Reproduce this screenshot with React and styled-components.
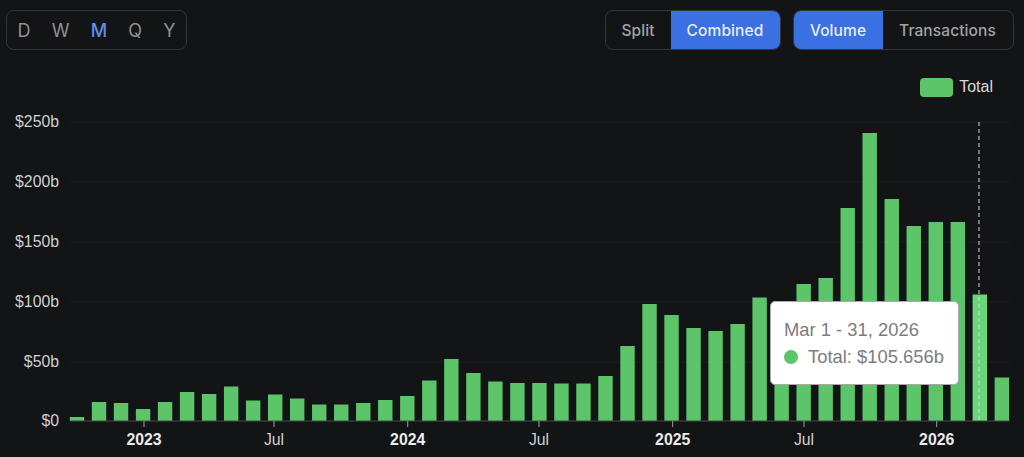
import React from 'react'
import styled, { createGlobalStyle } from 'styled-components'

const CHART_TOP = 100
const BASELINE = 421 - CHART_TOP
const BAR_WIDTH = 14.4
const BAR_START = 69.8
const BAR_STEP = 22.02

// top edge of each monthly bar, in page pixels
const barTops = [
    417, 402, 403, 409, 402, 392, 394, 386.5, 400.5, 394.5, 398.5,
    404.5, 404.5, 403, 400, 396, 380.5, 359, 373, 381.5, 383, 383,
    383.5, 383.5, 376, 346, 304, 315, 328, 331, 324, 297.5, 312,
    284, 278, 208, 133, 199, 226, 222, 222, 294.5, 377.5,
]

const yTicks = [
    { label: '$250b', y: 122 },
    { label: '$200b', y: 182 },
    { label: '$150b', y: 242 },
    { label: '$100b', y: 302 },
    { label: '$50b', y: 362 },
    { label: '$0', y: 421 },
]

const xTicks = [
    { label: '2023', x: 144, bold: true },
    { label: 'Jul', x: 274 },
    { label: '2024', x: 407.7, bold: true },
    { label: 'Jul', x: 539 },
    { label: '2025', x: 672.7, bold: true },
    { label: 'Jul', x: 804 },
    { label: '2026', x: 936.7, bold: true },
]

const GlobalStyle = createGlobalStyle`
    html, body {
        margin: 0;
        padding: 0;
        background: #131416;
    }
`

function App() {
    return (
        <Page>
            <GlobalStyle />
            <Toolbar>
                <Group>
                    <PeriodButton>D</PeriodButton>
                    <PeriodButton>W</PeriodButton>
                    <PeriodButton $active>M</PeriodButton>
                    <PeriodButton>Q</PeriodButton>
                    <PeriodButton>Y</PeriodButton>
                </Group>
                <ToolbarRight>
                    <Group>
                        <ToggleButton $width={65}>Split</ToggleButton>
                        <ToggleButton $width={109} $active>Combined</ToggleButton>
                    </Group>
                    <Group>
                        <ToggleButton $width={89} $active>Volume</ToggleButton>
                        <ToggleButton $width={130}>Transactions</ToggleButton>
                    </Group>
                </ToolbarRight>
            </Toolbar>
            <Legend>
                <Swatch />
                <span>Total</span>
            </Legend>
            <ChartArea>
                <ChartSvg viewBox={`0 0 1024 ${457 - CHART_TOP}`}>
                    {yTicks.map((tick) => (
                        <g key={tick.label}>
                            {tick.label !== '$0' && (
                                <line x1="70" x2="1010" y1={tick.y - CHART_TOP} y2={tick.y - CHART_TOP} stroke="#1c1d20" />
                            )}
                            <AxisText x="59" y={tick.y - CHART_TOP + 5} textAnchor="end">{tick.label}</AxisText>
                        </g>
                    ))}
                    {barTops.map((top, i) => (
                        <rect
                            key={i}
                            x={BAR_START + i * BAR_STEP}
                            y={top - CHART_TOP}
                            width={BAR_WIDTH}
                            height={421 - top}
                            fill={i === 41 ? '#69d67b' : '#5cc469'}
                        />
                    ))}
                    <line x1="70" x2="1010" y1={BASELINE} y2={BASELINE} stroke="#47484b" />
                    {xTicks.map((tick) => (
                        <g key={tick.x}>
                            <line x1={tick.x} x2={tick.x} y1={BASELINE} y2={BASELINE + 6} stroke="#9b9c9e" />
                            <AxisText x={tick.x} y={BASELINE + 24} textAnchor="middle" $bold={tick.bold}>{tick.label}</AxisText>
                        </g>
                    ))}
                    <line x1="979" x2="979" y1={22} y2={BASELINE} stroke="#d5d6d8" strokeDasharray="4 3" />
                </ChartSvg>
                <Tooltip>
                    <TooltipTitle>Mar 1 - 31, 2026</TooltipTitle>
                    <TooltipRow>
                        <Dot />
                        <span>Total: $105.656b</span>
                    </TooltipRow>
                </Tooltip>
            </ChartArea>
        </Page>
    )
}

const Page = styled.div`
    width: 1024px;
    height: 457px;
    overflow: hidden;
    background: #131416;
    font-family: Inter, "Liberation Sans", sans-serif;
`

const Toolbar = styled.div`
    display: flex;
    justify-content: space-between;
    padding: 10px 10.5px 0 6px;
`

const ToolbarRight = styled.div`
    display: flex;
    gap: 12px;
`

const Group = styled.div`
    display: flex;
    height: 40px;
    box-sizing: border-box;
    border: 1px solid #34353a;
    border-radius: 8px;
    overflow: hidden;
`

const PeriodButton = styled.div`
    padding: 0 10.6px;
    display: flex;
    align-items: center;
    justify-content: center;
    font-size: 18px;
    font-weight: ${(props) => (props.$active ? 500 : 400)};
    color: ${(props) => (props.$active ? '#5c8fe8' : '#8f9092')};
`

const ToggleButton = styled.div`
    width: ${(props) => props.$width}px;
    display: flex;
    align-items: center;
    justify-content: center;
    font-size: 15.5px;
    font-weight: 500;
    letter-spacing: 0.1px;
    background: ${(props) => (props.$active ? '#3a70e2' : 'transparent')};
    color: ${(props) => (props.$active ? '#e6ecf8' : '#a2a3a5')};
`

const Legend = styled.div`
    display: flex;
    justify-content: flex-end;
    align-items: center;
    gap: 6px;
    height: 20px;
    margin-top: 27px;
    padding-right: 31px;
    font-family: "Liberation Sans", sans-serif;
    font-size: 16px;
    color: #d8d9da;
`

const Swatch = styled.div`
    width: 33px;
    height: 19px;
    border-radius: 4px;
    background: #5cc469;
`

const ChartArea = styled.div`
    position: relative;
    margin-top: 3px;
    height: 357px;
`

const ChartSvg = styled.svg`
    display: block;
    width: 1024px;
    height: 357px;
`

const AxisText = styled.text`
    font-family: "Liberation Sans", sans-serif;
    font-size: 15.8px;
    font-weight: ${(props) => (props.$bold ? 700 : 400)};
    fill: ${(props) => (props.$bold ? '#ececed' : '#cfd0d1')};
`

const Tooltip = styled.div`
    position: absolute;
    left: 770px;
    top: 201px;
    width: 189px;
    height: 84px;
    box-sizing: border-box;
    padding: 18px 13px 0;
    background: #ffffff;
    border: 1px solid #a9a9a9;
    border-radius: 5px;
    font-family: "Liberation Sans", sans-serif;
    font-size: 18.4px;
    color: #7c7d80;
`

const TooltipTitle = styled.div`
    line-height: 20px;
`

const TooltipRow = styled.div`
    display: flex;
    align-items: center;
    gap: 10px;
    margin-top: 7px;
    line-height: 20px;
`

const Dot = styled.span`
    width: 14px;
    height: 14px;
    border-radius: 50%;
    background: #5cc469;
`

export default App
